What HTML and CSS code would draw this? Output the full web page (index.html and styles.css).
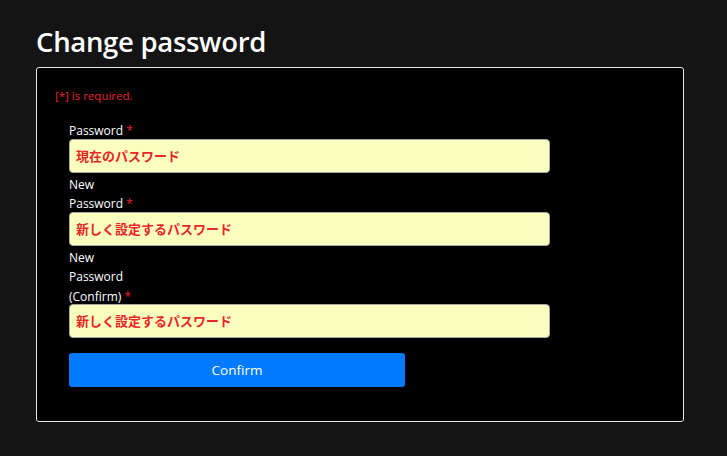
FILE: index.html
```html
<!DOCTYPE html>
<html lang="ja">
<head>
<meta charset="utf-8">
<link rel="stylesheet" href="styles.css">
</head>
<body>
<div class="page">
  <h1 class="title">Change password</h1>
  <div class="card">
    <p class="req-note">[*] is required.</p>
    <form class="form">
      <div class="group">
        <label class="label">Password <span class="star">*</span></label>
        <div class="input">現在のパスワード</div>
      </div>
      <div class="group">
        <label class="label">New Password <span class="star">*</span></label>
        <div class="input">新しく設定するパスワード</div>
      </div>
      <div class="group">
        <label class="label">New Password (Confirm) <span class="star">*</span></label>
        <div class="input">新しく設定するパスワード</div>
      </div>
      <button type="button" class="btn">Confirm</button>
    </form>
  </div>
</div>
</body>
</html>
```

FILE: styles.css
```css
html, body {
  margin: 0;
  padding: 0;
  background: #141414;
}
body {
  font-family: "Open Sans", "Noto Sans", "Noto Sans CJK JP", sans-serif;
  color: #fff;
}
.page {
  padding: 24px 0 0 36px;
  width: 648px;
}
.title {
  margin: 0 0 7px 0;
  font-size: 27.5px;
  font-weight: 600;
  line-height: 36px;
  letter-spacing: -0.3px;
}
.card {
  background: #000;
  border: 1px solid #e6e6e6;
  border-radius: 3px;
  padding: 19px 18px 34px 18px;
}
.req-note {
  margin: 0 0 14px 0;
  color: #e8222c;
  font-size: 11.5px;
  font-weight: 400;
  line-height: 18px;
}
.form {
  padding-left: 14px;
  display: flex;
  flex-direction: column;
}
.group {
  display: flex;
  flex-direction: column;
}
.label {
  width: 66px;
  font-size: 12px;
  line-height: 19.5px;
  padding-top: 2px;
  margin-bottom: -2px;
  color: #fff;
}
.star {
  color: #e8222c;
}
.input {
  width: 481px;
  height: 34px;
  box-sizing: border-box;
  background: #faffbd;
  border: 1px solid #a8a8a8;
  border-radius: 4px;
  padding: 0 6px;
  font-family: "Noto Sans CJK JP", sans-serif;
  font-weight: 700;
  font-size: 13px;
  line-height: 32px;
  color: #e8262b;
}
.btn {
  margin-top: 15px;
  width: 336px;
  height: 34px;
  background: #007bff;
  color: #fff;
  border: none;
  border-radius: 3px;
  font-family: "Open Sans", "Noto Sans", sans-serif;
  font-size: 13.5px;
  padding: 0;
}
```
